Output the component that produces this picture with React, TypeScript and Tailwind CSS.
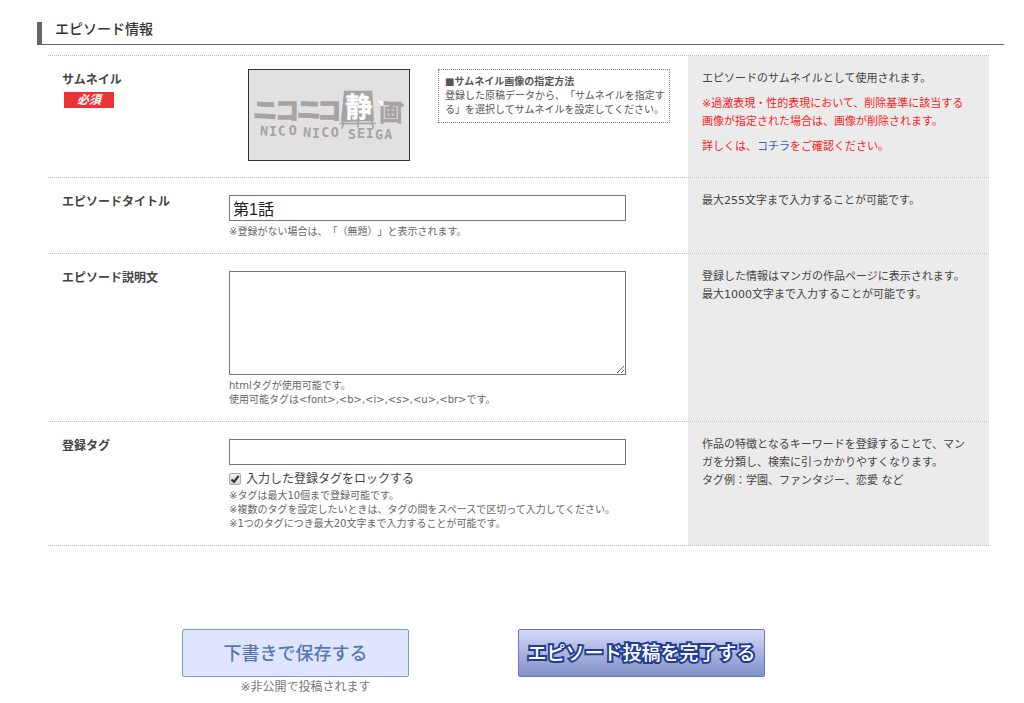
import { useState, type ReactNode } from "react";

const NOTE = "text-[10px] leading-[14px] text-[#666]";
const FIELD = "block w-full border border-[#767676] bg-white px-[3px] text-[16px] text-[#222]";

function Row({
  label,
  htmlFor,
  required,
  help,
  children,
}: {
  label: string;
  htmlFor: string;
  required?: boolean;
  help: ReactNode;
  children: ReactNode;
}) {
  return (
    <div className="grid grid-cols-[168px_1fr_301px] border-t border-dotted border-[#bbb]">
      <div className="px-3.5 pt-[15px]">
        <label htmlFor={htmlFor} className="block text-[12px] leading-[18px] font-bold text-[#444]">
          {label}
        </label>
        {required && (
          <span className="mt-[3px] ml-0.5 block h-4 w-[50px] bg-[#ee3135] text-center text-[12px] leading-4 font-bold text-white italic">
            必須
          </span>
        )}
      </div>
      <div className="pt-[17px] pr-[62px] pb-3.5 pl-[13px]">{children}</div>
      <div className="flex flex-col gap-[7px] bg-[#ebebeb] py-3.5 pr-5 pl-3.5 text-[11px] leading-[18px] text-[#444]">
        {help}
      </div>
    </div>
  );
}

function SeigaLogo() {
  return (
    <svg viewBox="28 32 480 270" className="block h-full w-full" role="img" aria-label="ニコニコ静画">
      <g fill="#a7a3a3" stroke="#a7a3a3" strokeWidth="4" fontFamily="'Noto Sans CJK JP', sans-serif" fontWeight="700">
        <text x="40 106 171 233" y="177 178 175 180" rotate="3 0 3 0" fontSize="72">
          ニコニコ
        </text>
        <text x="417" y="185" fontSize="72" strokeWidth="1">
          画
        </text>
      </g>
      {/* easel */}
      <path d="M313 94 L398 94 L403 185 L304 188 Z" fill="#a7a3a3" />
      <g stroke="#a7a3a3" strokeWidth="5" strokeLinecap="round">
        <path d="M302 193 L406 192" />
        <path d="M313 186 L307 206 M355 186 L355 203 M396 186 L401 206" />
      </g>
      <text
        x="317"
        y="172"
        fontSize="82"
        fontWeight="700"
        fill="#fff"
        stroke="#fff"
        strokeWidth="1"
        fontFamily="'Noto Sans CJK JP', sans-serif"
      >
        静
      </text>
      {/* brush */}
      <path d="M430 125 L493 134 L491 142 L431 137 Z" fill="#a7a3a3" />
      <path d="M413 123 L432 126 L431 137 L424 140 Z" fill="#fff" />
      <g
        fill="#a7a3a3"
        fontFamily="'DejaVu Sans Mono', monospace"
        fontWeight="700"
        fontSize="40"
      >
        <text x="60 88 115 147" y="228 229 229 228" rotate="4 0 -3 0">
          NICO
        </text>
        <text x="189 217 245 273" y="232 235 233 232" rotate="4 0 0 0">
          NICO
        </text>
        <text x="325 352 378 405 434" y="238 237 237 239 239" rotate="0 0 0 3 0">
          SEIGA
        </text>
      </g>
    </svg>
  );
}

export default function App() {
  const [title, setTitle] = useState("第1話");
  const [locked, setLocked] = useState(true);

  return (
    <main className="min-h-screen bg-white pt-[22px] pr-5 pl-[37px] font-['DejaVu_Sans','Noto_Sans_CJK_JP',sans-serif] [text-spacing-trim:space-all]">
      <h2 className="border-b border-l-5 border-b-[#666] border-l-[#666] pb-2 pl-[13px] text-[14px] leading-[14px] font-medium text-[#333]">
        エピソード情報
      </h2>

      <form onSubmit={(e) => e.preventDefault()}>
        <div className="mt-2.5 mr-[15px] ml-[11px] border-b border-dotted border-[#bbb]">
          <Row
            label="サムネイル"
            htmlFor="thumbnail"
            required
            help={
              <>
                <p>エピソードのサムネイルとして使用されます。</p>
                <p className="text-[#ff1c1c]">
                  ※過激表現・性的表現において、削除基準に該当する画像が指定された場合は、画像が削除されます。
                </p>
                <p className="text-[#ff1c1c]">
                  詳しくは、
                  <a href="#guideline" className="text-[#3b66a8]">
                    コチラ
                  </a>
                  をご確認ください。
                </p>
              </>
            }
          >
            <div className="-mt-1 -mr-11 mb-0.5 flex items-start justify-between pl-[19px]">
              <button
                id="thumbnail"
                type="button"
                className="h-[92px] w-[162px] border border-[#333] bg-[#e1e1e1]"
              >
                <SeigaLogo />
              </button>
              <div className="w-[232px] border border-dotted border-[#888] py-[5px] pr-1 pl-1.5 text-[10px] leading-[14px] text-[#555]">
                <p className="font-bold">■サムネイル画像の指定方法</p>
                <p>登録した原稿データから、「サムネイルを指定する」を選択してサムネイルを設定してください。</p>
              </div>
            </div>
          </Row>

          <Row label="エピソードタイトル" htmlFor="title" help={<p>最大255文字まで入力することが可能です。</p>}>
            <input
              id="title"
              type="text"
              value={title}
              onChange={(e) => setTitle(e.target.value)}
              className={`${FIELD} h-[26px] font-['Liberation_Sans','Noto_Sans_CJK_JP',sans-serif]`}
            />
            <p className={`${NOTE} mt-1`}>※登録がない場合は、「（無題）」と表示されます。</p>
          </Row>

          <Row
            label="エピソード説明文"
            htmlFor="description"
            help={
              <p>
                登録した情報はマンガの作品ページに表示されます。
                <br />
                最大1000文字まで入力することが可能です。
              </p>
            }
          >
            <textarea id="description" className={`${FIELD} h-[104px] resize`} />
            <p className={`${NOTE} mt-1`}>
              htmlタグが使用可能です。
              <br />
              使用可能タグは&lt;font&gt;,&lt;b&gt;,&lt;i&gt;,&lt;s&gt;,&lt;u&gt;,&lt;br&gt;です。
            </p>
          </Row>

          <Row
            label="登録タグ"
            htmlFor="tags"
            help={
              <p>
                作品の特徴となるキーワードを登録することで、マンガを分類し、検索に引っかかりやすくなります。
                <br />
                タグ例：学園、ファンタジー、恋愛 など
              </p>
            }
          >
            <input id="tags" type="text" className={`${FIELD} h-[26px]`} />
            <label className="mt-1.5 flex h-4 items-center gap-[5px] text-[12px] leading-4 text-[#444]">
              <span className="grid size-3">
                <input
                  type="checkbox"
                  checked={locked}
                  onChange={(e) => setLocked(e.target.checked)}
                  className="peer col-start-1 row-start-1 size-3 appearance-none rounded-xs border border-[#aaa] bg-linear-to-b from-[#f0f0f0] to-[#d8d8d8]"
                />
                <svg
                  viewBox="0 0 12 12"
                  className="pointer-events-none invisible col-start-1 row-start-1 size-3 peer-checked:visible"
                >
                  <path d="M2.5 6.5 L5 8.8 L9.6 2.8" fill="none" stroke="#333" strokeWidth="2.2" />
                </svg>
              </span>
              入力した登録タグをロックする
            </label>
            <p className={`${NOTE} mt-0.5`}>
              ※タグは最大10個まで登録可能です。
              <br />
              ※複数のタグを設定したいときは、タグの間をスペースで区切って入力してください。
              <br />
              ※1つのタグにつき最大20文字まで入力することが可能です。
            </p>
          </Row>
        </div>

        <div className="mt-[83px] flex items-start justify-center gap-[109px] pr-[94px]">
          <div>
            <button
              type="submit"
              className="block h-12 w-[227px] rounded-xs border border-[#7f9ccf] bg-[#dfe4ff] text-[18px] font-medium text-[#5578b4]"
            >
              下書きで保存する
            </button>
            <p className="pl-5 text-center text-[12px] leading-5 text-[#777]">※非公開で投稿されます</p>
          </div>
          <button
            type="submit"
            className="h-12 w-[247px] rounded-xs border border-[#6f73cc] bg-linear-to-b from-[#d6d9f8] to-[#7f90c6] text-[19px] font-medium text-white [paint-order:stroke_fill] [-webkit-text-stroke:4px_#1f3d96]"
          >
            エピソード投稿を完了する
          </button>
        </div>
      </form>
    </main>
  );
}
